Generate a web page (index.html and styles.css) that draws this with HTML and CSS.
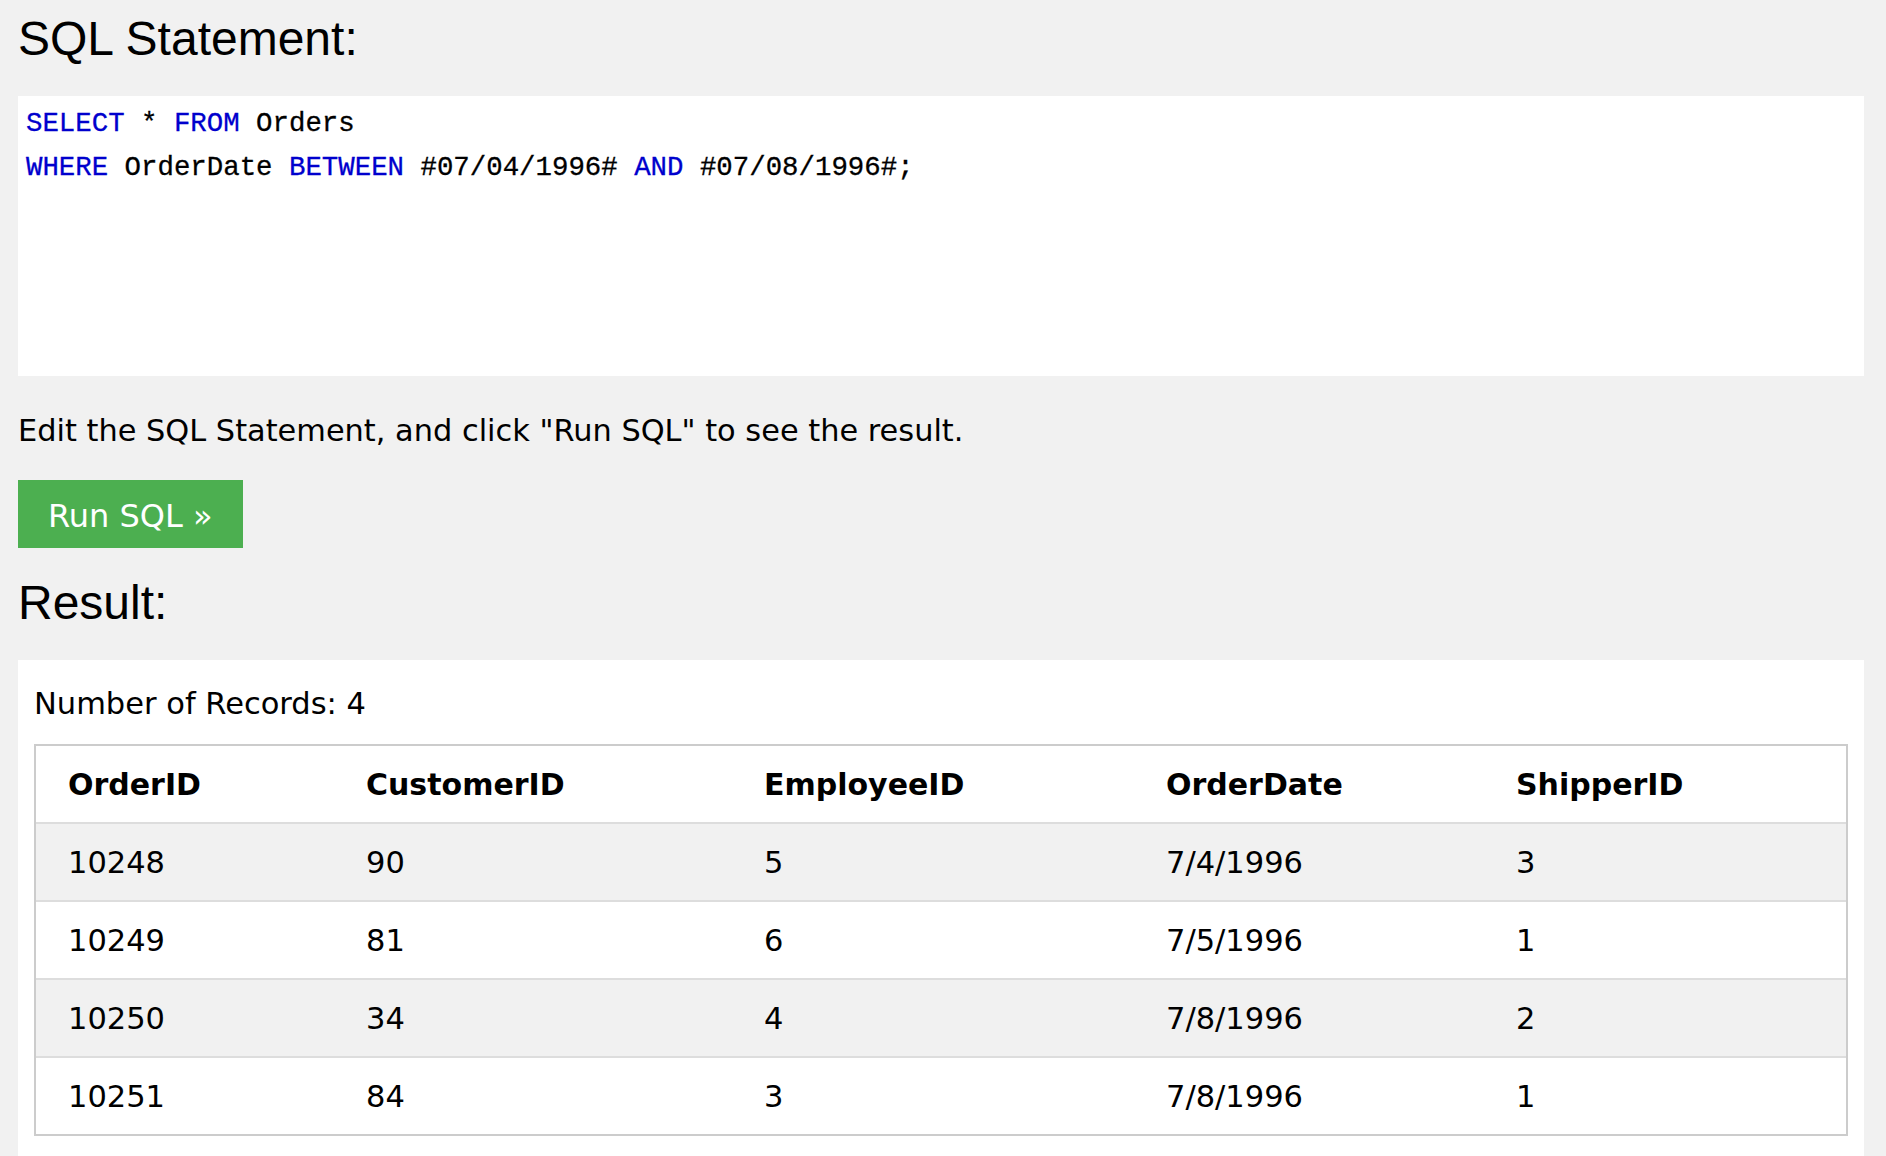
FILE: index.html
```html
<!DOCTYPE html>
<html lang="en">
<head>
<meta charset="utf-8">
<title>SQL Tryit</title>
<link rel="stylesheet" href="styles.css">
</head>
<body>
<div class="page">
  <h2 class="title">SQL Statement:</h2>
  <div class="code">
    <div class="code-line"><span class="kw">SELECT</span> * <span class="kw">FROM</span> Orders</div>
    <div class="code-line"><span class="kw">WHERE</span> OrderDate <span class="kw">BETWEEN</span> #07/04/1996# <span class="kw">AND</span> #07/08/1996#;</div>
  </div>
  <p class="hint">Edit the SQL Statement, and click "Run SQL" to see the result.</p>
  <button class="run-btn" type="button">Run SQL »</button>
  <h2 class="title result-title">Result:</h2>
  <div class="result">
    <div class="count">Number of Records: 4</div>
    <table class="grid">
      <thead>
        <tr>
          <th class="c1">OrderID</th>
          <th class="c2">CustomerID</th>
          <th class="c3">EmployeeID</th>
          <th class="c4">OrderDate</th>
          <th class="c5">ShipperID</th>
        </tr>
      </thead>
      <tbody>
        <tr><td>10248</td><td>90</td><td>5</td><td>7/4/1996</td><td>3</td></tr>
        <tr><td>10249</td><td>81</td><td>6</td><td>7/5/1996</td><td>1</td></tr>
        <tr><td>10250</td><td>34</td><td>4</td><td>7/8/1996</td><td>2</td></tr>
        <tr><td>10251</td><td>84</td><td>3</td><td>7/8/1996</td><td>1</td></tr>
      </tbody>
    </table>
  </div>
</div>
</body>
</html>
```

FILE: styles.css
```css
html, body {
  margin: 0;
  padding: 0;
  background: #f1f1f1;
  height: 100%;
  overflow: hidden;
}

.page {
  padding: 12px 22px 0 18px;
  font-family: "DejaVu Sans", Verdana, sans-serif;
  color: #000;
}

.title {
  margin: 0;
  font-family: "Liberation Sans", Arial, sans-serif;
  font-weight: normal;
  font-size: 48px;
  line-height: 54px;
}

.code {
  margin-top: 30px;
  height: 280px;
  box-sizing: border-box;
  background: #fff;
  padding: 6px 8px;
  font-family: "Liberation Mono", "Courier New", monospace;
  font-size: 27.4px;
  line-height: 44px;
}

.code-line {
  white-space: pre;
  -webkit-text-stroke: 0.3px currentColor;
}

.kw {
  color: #0000cd;
}

.hint {
  margin: 33px 0 0;
  font-size: 30.4px;
  line-height: 44px;
}

.run-btn {
  display: block;
  margin-top: 27px;
  border: none;
  background: #4caf50;
  color: #fff;
  font-family: "DejaVu Sans", Verdana, sans-serif;
  font-size: 32px;
  line-height: 40px;
  padding: 16px 30px 12px;
  cursor: pointer;
}

.result-title {
  margin-top: 28px;
}

.result {
  margin-top: 30px;
  background: #fff;
  padding: 22px 16px 40px;
  font-size: 30.5px;
  line-height: 44px;
}

.count {
  margin-bottom: 18px;
}

.grid {
  width: 100%;
  table-layout: fixed;
  border-collapse: separate;
  border-spacing: 0;
  border: 2px solid #ccc;
  font-size: 30.5px;
  line-height: 44px;
}

.grid th,
.grid td {
  box-sizing: border-box;
  text-align: left;
  padding: 17px 32px 15px;
  border-bottom: 2px solid #ddd;
}

.grid th {
  font-weight: bold;
  font-size: 30px;
  background: #fff;
}

.grid tbody tr:nth-child(odd) td {
  background: #f1f1f1;
}

.grid tbody tr:nth-child(even) td {
  background: #fff;
}

.grid tbody tr:last-child td {
  border-bottom: none;
}

.c1 { width: 298px; }
.c2 { width: 398px; }
.c3 { width: 402px; }
.c4 { width: 350px; }
```
